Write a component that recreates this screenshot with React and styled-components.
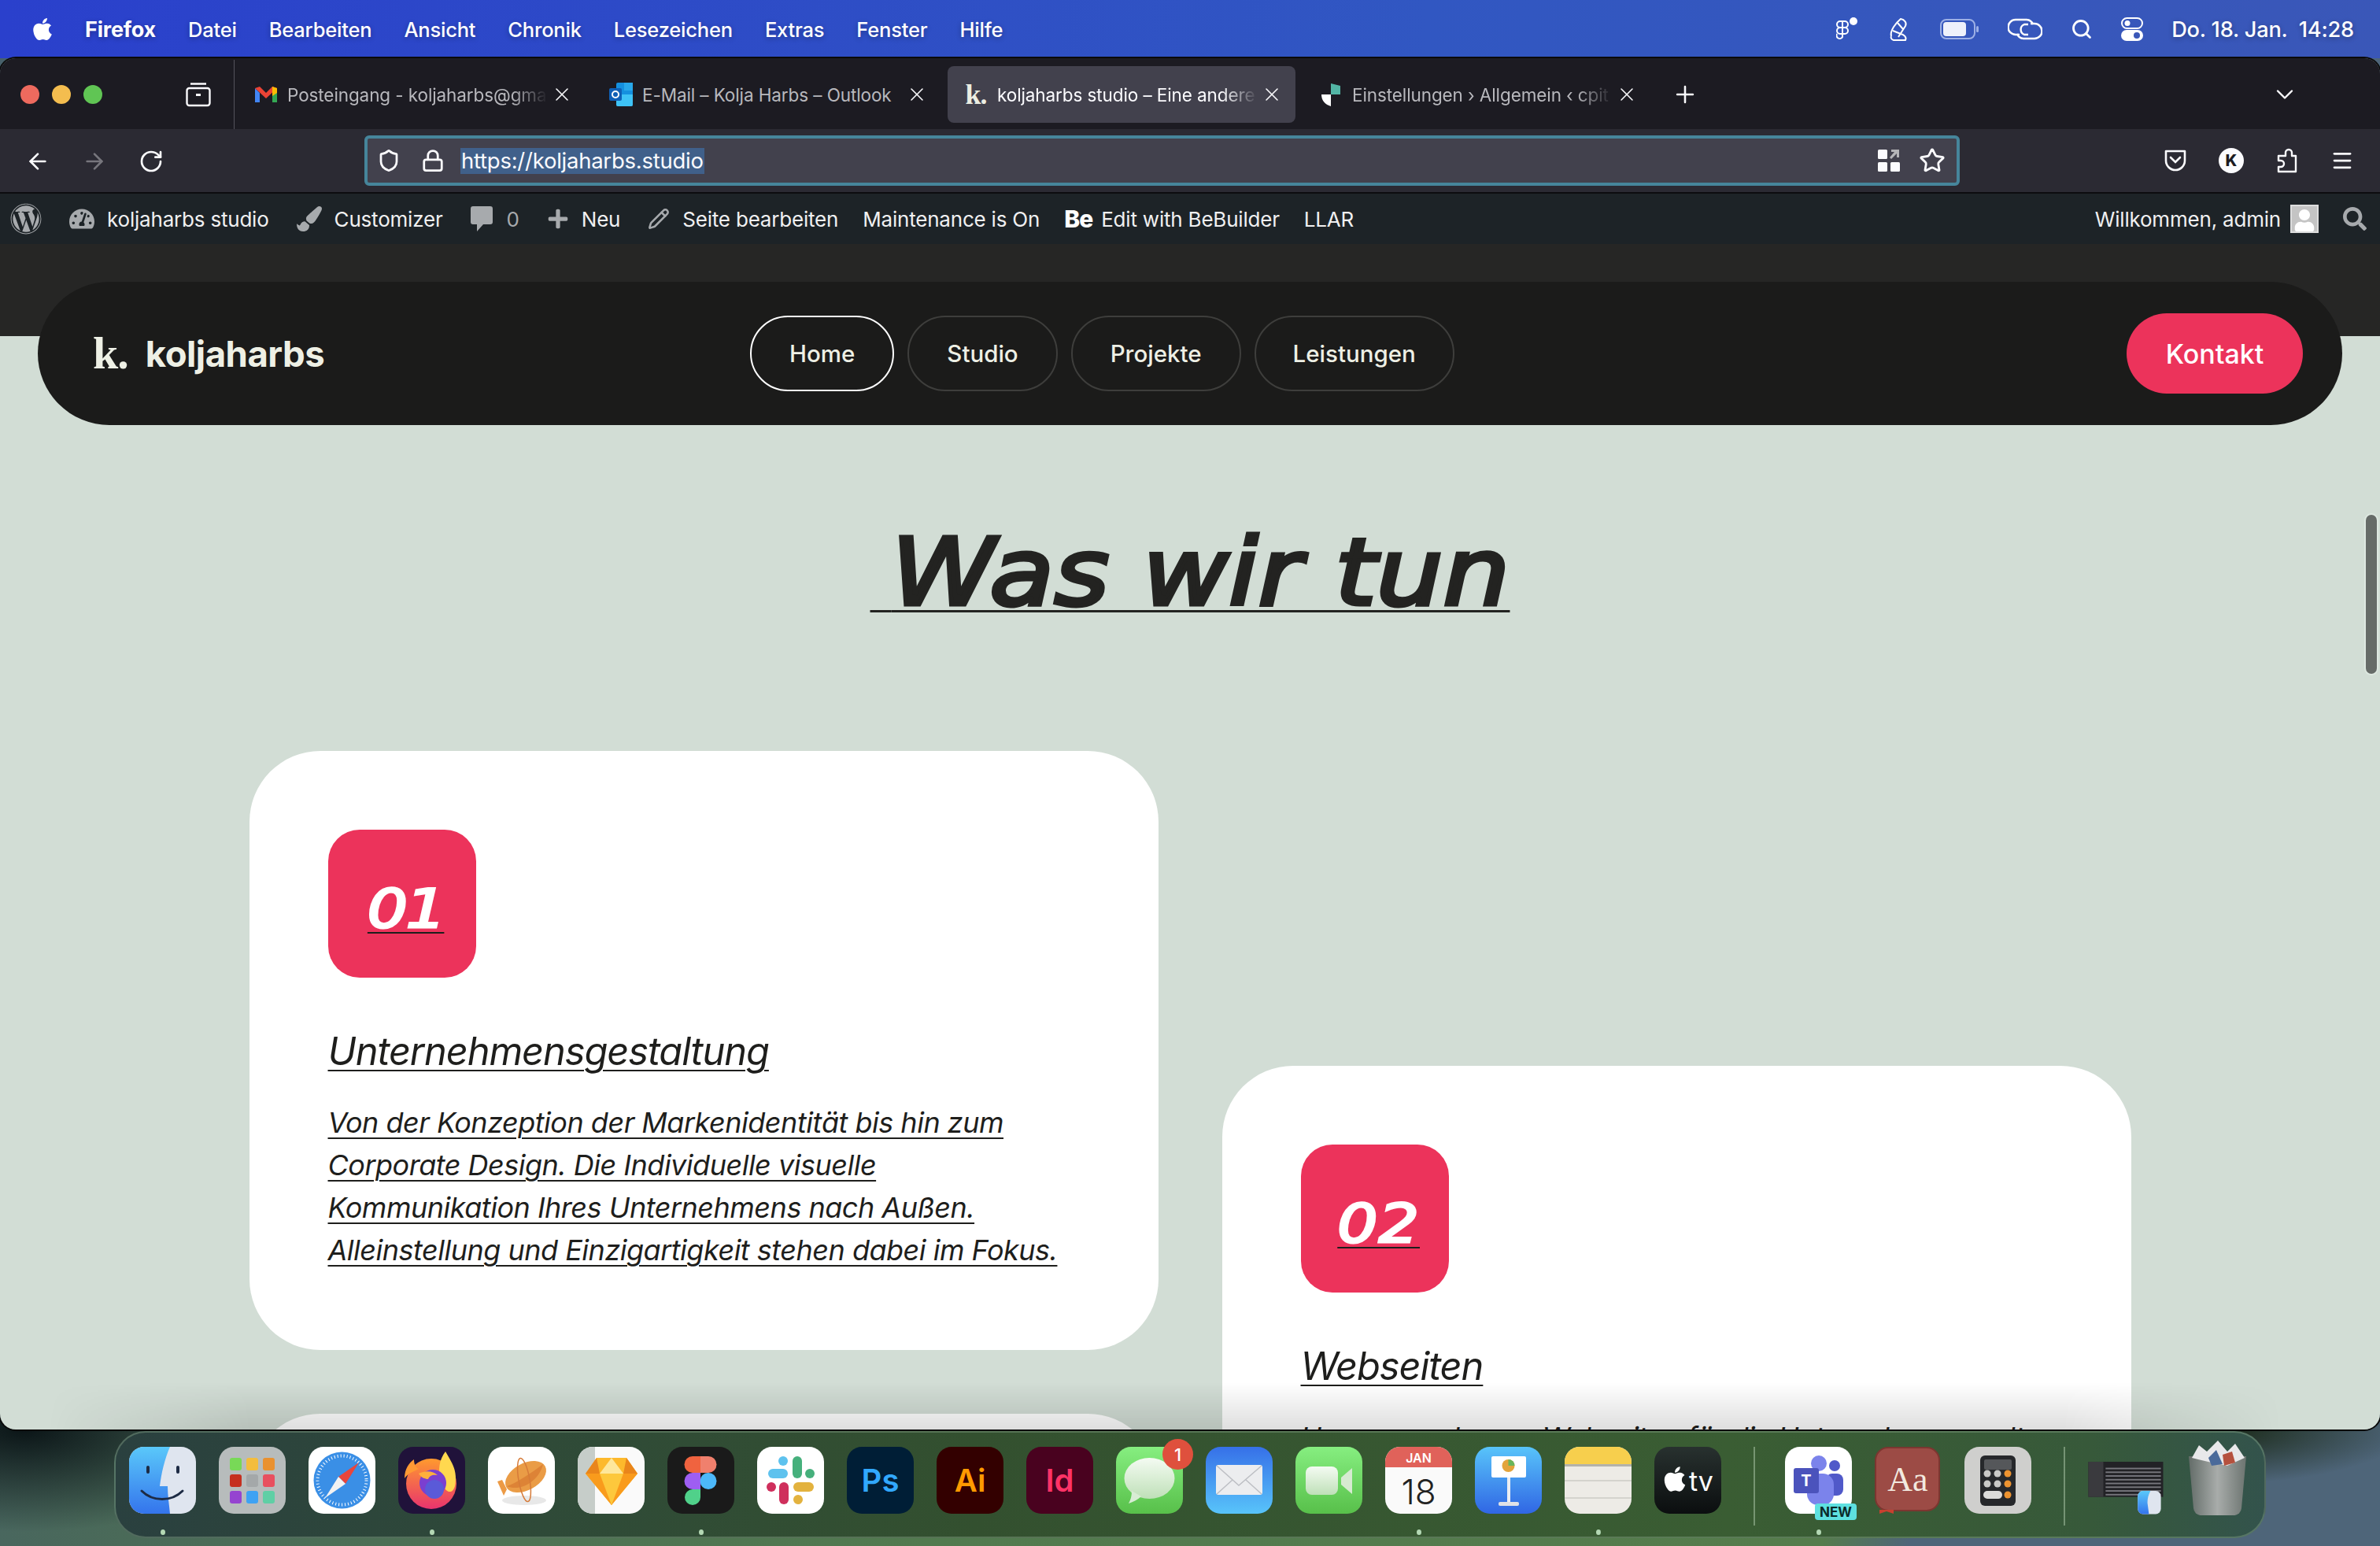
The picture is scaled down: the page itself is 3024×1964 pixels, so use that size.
import React from 'react';
import styled, { createGlobalStyle } from 'styled-components';
import { X, Plus, ChevronDown, ArrowLeft, ArrowRight, RotateCw, Shield, Lock, Star, Menu, Search, Pencil } from 'lucide-react';
import { FaApple, FaWordpress, FaTachometerAlt, FaPaintBrush, FaPlus, FaSearch, FaUser } from 'react-icons/fa';

const SF = '"Inter", "Liberation Sans", sans-serif';

const GlobalStyle = createGlobalStyle`
  html, body { margin: 0; padding: 0; background: #47606b; }
  * { box-sizing: border-box; }
`;

const Desktop = styled.div`
  width: 3024px;
  height: 1964px;
  overflow: hidden;
  display: flex;
  flex-direction: column;
  font-family: ${SF};
  background:
    radial-gradient(ellipse 320px 130px at 30px 1816px, #0b1517 0%, rgba(11, 21, 23, 0) 100%),
    radial-gradient(ellipse 260px 70px at 2800px 1816px, #16240f 0%, rgba(22, 36, 15, 0) 100%),
    linear-gradient(100deg, #47606b 0, #4a6a58 500px, #527a4f 1500px, #557c4c 2620px, #4e6579 2730px);
`;

const MenuBar = styled.div`
  height: 74px;
  flex: none;
  display: flex;
  align-items: center;
  padding: 0 33px 0 38px;
  gap: 41px;
  color: #fff;
  font-size: 25.5px;
  font-weight: 500;
  letter-spacing: -0.2px;
  text-shadow: 0 2px 6px rgba(0, 0, 0, 0.3);
  background: linear-gradient(90deg, #2a40cc 0, #3157c2 60%, #3a57b8 100%);
`;

const AppleMark = styled(FaApple)`
  font-size: 32px;
  margin-right: -3px;
`;

const MenuName = styled.span`
  font-weight: ${(p) => (p.$bold ? 700 : 500)};
  font-size: ${(p) => (p.$bold ? '27px' : 'inherit')};
`;

const StatusArea = styled.div`
  margin-left: auto;
  display: flex;
  align-items: center;
  gap: 36px;
`;

const ClockText = styled.span`
  font-size: 27.2px;
`;

const BrowserWindow = styled.div`
  flex: none;
  height: 1742px;
  display: flex;
  flex-direction: column;
  overflow: hidden;
  border-radius: 20px;
  box-shadow: 0 0 0 2px #0a0a0a, inset 0 1px 0 #6a6a6a;
`;

const TabBar = styled.div`
  height: 90px;
  flex: none;
  display: flex;
  align-items: center;
  padding-top: 2px;
  background: #1c1b22;
`;

const TabLeading = styled.div`
  width: 298px;
  height: 100%;
  flex: none;
  display: flex;
  align-items: center;
  padding-left: 26px;
  gap: 16px;
  border-right: 1px solid #55545c;
  margin-right: 4px;
`;

const TrafficLight = styled.span`
  width: 24px;
  height: 24px;
  border-radius: 50%;
  background: ${(p) => p.$color};
`;

const ViewButton = styled.svg`
  width: 32px;
  height: 32px;
  margin-left: 90px;
`;

const Tab = styled.div`
  width: 442px;
  height: 72px;
  flex: none;
  margin-right: 9px;
  display: flex;
  align-items: center;
  padding: 0 16px 0 20px;
  border-radius: 8px;
  font-size: 22.5px;
  letter-spacing: -0.1px;
  color: ${(p) => (p.$active ? '#fbfbfe' : '#b8b8bd')};
  background: ${(p) => (p.$active ? '#42414d' : 'transparent')};
`;

const Favicon = styled.span`
  width: 32px;
  height: 32px;
  margin-right: 11px;
  flex: none;
  display: flex;
  align-items: center;
  justify-content: center;
`;

const TabKMark = styled.span`
  font-family: "Liberation Serif", serif;
  font-weight: 700;
  font-size: 36px;
  line-height: 32px;
  letter-spacing: -1px;
  color: #eceee2;
`;

const TabTitle = styled.span`
  flex: 1;
  white-space: nowrap;
  overflow: hidden;
  -webkit-mask-image: ${(p) => (p.$plain ? 'none' : 'linear-gradient(90deg, #000 86%, transparent 100%)')};
  mask-image: ${(p) => (p.$plain ? 'none' : 'linear-gradient(90deg, #000 86%, transparent 100%)')};
`;

const TabClose = styled(X)`
  flex: none;
  margin-left: 4px;
  color: #fbfbfe;
`;

const TabStripButton = styled.span`
  display: flex;
  margin-left: ${(p) => p.$left};
  margin-right: ${(p) => p.$right || 0};
  color: #fbfbfe;
`;

const Toolbar = styled.div`
  height: 80px;
  flex: none;
  display: flex;
  align-items: center;
  padding: 0 33px 0 32px;
  background: #2b2a33;
  color: #fbfbfe;
`;

const NavIcons = styled.div`
  display: flex;
  gap: 40px;
  width: 431px;
  flex: none;
  margin-top: 2px;
`;

const UrlBar = styled.div`
  width: 2027px;
  height: 64px;
  flex: none;
  display: flex;
  align-items: center;
  padding: 0 14px 0 12px;
  background: #42414d;
  border: 4px solid #46859b;
  border-radius: 6px;
`;

const UrlLock = styled(Lock)`
  margin-left: 26px;
`;

const UrlText = styled.span`
  margin: 1px 0 0 20px;
  padding: 0 1px;
  font-size: 27.5px;
  line-height: 33px;
  color: #fbfbfe;
  background: #40608a;
  letter-spacing: -0.25px;
`;

const UrlActions = styled.div`
  margin-left: auto;
  display: flex;
  align-items: center;
  gap: 24px;
`;

const ToolbarActions = styled.div`
  margin-left: auto;
  display: flex;
  align-items: center;
  gap: 41px;
`;

const AccountBadge = styled.span`
  width: 32px;
  height: 32px;
  border-radius: 50%;
  display: flex;
  align-items: center;
  justify-content: center;
  background: #fbfbfe;
  color: #1c1b22;
  font-size: 20px;
  font-weight: 800;
`;

const AdminBar = styled.div`
  height: 66px;
  flex: none;
  display: flex;
  align-items: center;
  padding: 0 17px 0 13px;
  gap: 31px;
  font-size: 26px;
  letter-spacing: -0.2px;
  color: #f0f0f1;
  background: #1d2327;
  border-top: 2px solid #0c0c0f;
`;

const AdminItem = styled.span`
  display: flex;
  align-items: center;
  gap: ${(p) => p.$gap || 16}px;
  margin-left: ${(p) => (p.$plain ? 0 : 4)}px;
  color: ${(p) => (p.$muted ? '#a7aaad' : '#f0f0f1')};
  svg { color: #a7aaad; flex: none; }
`;

const BeMark = styled.span`
  font-weight: 800;
  font-size: 30px;
  letter-spacing: -1px;
  color: #fff;
`;

const AdminRight = styled.div`
  margin-left: auto;
  display: flex;
  align-items: center;
`;

const AvatarBox = styled.span`
  width: 36px;
  height: 36px;
  margin: 0 31px 0 12px;
  display: flex;
  align-items: flex-end;
  justify-content: center;
  overflow: hidden;
  background: #c4c4c4;
  border: 2px solid #ddd;
  svg { color: #fff; }
`;

const Page = styled.div`
  flex: 1;
  min-height: 0;
  position: relative;
  overflow: hidden;
  padding: 48px 48px 0;
  background: linear-gradient(#262625 117px, #d2ddd5 117px);
`;

const SiteNav = styled.nav`
  height: 182px;
  display: flex;
  align-items: center;
  padding: 0 50px 0 70px;
  background: #1b1b1a;
  border-radius: 91px;
`;

const Logo = styled.div`
  width: 835px;
  flex: none;
  display: flex;
  align-items: center;
  gap: 22px;
  color: #eef0e5;
`;

const LogoMark = styled.span`
  font-family: "Liberation Serif", serif;
  font-weight: 700;
  font-size: 58px;
  line-height: 60px;
  letter-spacing: -1px;
`;

const LogoName = styled.span`
  font-family: ${SF};
  font-weight: 700;
  font-size: 45.5px;
  letter-spacing: -0.5px;
`;

const NavLinks = styled.div`
  display: flex;
  gap: 17px;
`;

const NavLink = styled.a`
  height: 96px;
  display: flex;
  align-items: center;
  padding: 0 ${(p) => p.$pad}px;
  border-radius: 48px;
  font-size: 29.5px;
  font-weight: 500;
  color: #eef0e5;
  border: 2px solid ${(p) => (p.$active ? '#fff' : '#3e3e3c')};
`;

const ContactButton = styled.a`
  margin-left: auto;
  width: 224px;
  height: 102px;
  display: flex;
  align-items: center;
  justify-content: center;
  border-radius: 51px;
  background: #ec335b;
  color: #fff;
  font-size: 34px;
  font-weight: 500;
`;

const Headline = styled.h1`
  margin: 113px 0 0;
  text-align: center;
  font-family: "DejaVu Sans", sans-serif;
  font-style: italic;
  font-weight: 400;
  font-size: 118px;
  line-height: 148px;
  letter-spacing: 0;
  color: #232321;
  -webkit-text-stroke: 5px #232321;
  text-decoration: underline;
  text-decoration-thickness: 3px;
  text-underline-offset: 7px;
  transform: scaleX(1.135);
`;

const CardGrid = styled.div`
  margin-top: 153px;
  display: flex;
  justify-content: center;
  gap: 81px;
`;

const CardColumn = styled.div`
  width: 1155px;
  flex: none;
  display: flex;
  flex-direction: column;
  gap: 81px;
  padding-top: ${(p) => p.$offset || 0}px;
`;

const Card = styled.article`
  min-height: 761px;
  padding: 100px;
  background: #fff;
  border-radius: 90px;
`;

const NumberBadge = styled.div`
  width: 188px;
  height: 188px;
  padding: 14px 0 0 10px;
  display: flex;
  align-items: center;
  justify-content: center;
  border-radius: 40px;
  background: #ec335b;
`;

const NumberLabel = styled.span`
  display: inline-block;
  color: #fff;
  font-family: "DejaVu Sans", sans-serif;
  font-style: italic;
  font-weight: 400;
  font-size: 67px;
  letter-spacing: ${(p) => p.$spacing}px;
  -webkit-text-stroke: 3px #fff;
  text-decoration: underline;
  text-decoration-color: #1e1e1c;
  text-decoration-thickness: 2px;
  text-underline-offset: 6px;
  transform: scaleX(1.2);
`;

const CardTitle = styled.h3`
  margin: 62px 0 0;
  font-size: 48.8px;
  line-height: 64px;
  font-weight: 400;
  font-style: italic;
  letter-spacing: -1.1px;
  color: #1e1e1c;
  text-decoration: underline;
  text-decoration-thickness: 2px;
  text-underline-offset: 6px;
`;

const CardText = styled.p`
  margin: 31px 0 0;
  font-size: 36px;
  line-height: 54px;
  font-style: italic;
  letter-spacing: -0.5px;
  color: #1e1e1c;
  text-decoration: underline;
  text-decoration-thickness: 2px;
  text-underline-offset: 6px;
`;

const BottomShade = styled.div`
  position: absolute;
  left: 0;
  right: 0;
  bottom: 0;
  height: 60px;
  background: linear-gradient(rgba(0, 0, 0, 0), rgba(0, 0, 0, 0.13));
  -webkit-mask-image: linear-gradient(90deg, transparent 60px, #000 320px, #000 2620px, transparent 2900px);
  mask-image: linear-gradient(90deg, transparent 60px, #000 320px, #000 2620px, transparent 2900px);
`;

const ScrollThumb = styled.div`
  position: absolute;
  right: 4px;
  top: 344px;
  width: 14px;
  height: 202px;
  border-radius: 7px;
  background: #666b68;
  box-shadow: 0 0 0 2px rgba(230, 240, 234, 0.6);
`;

const Dock = styled.div`
  width: 2734px;
  height: 136px;
  margin: 2px 0 0 145px;
  flex: none;
  display: flex;
  padding: 18px 0 0 17px;
  gap: 29px;
  border: 2px solid rgba(140, 170, 140, 0.4);
  border-radius: 40px;
  background: linear-gradient(90deg, #2a403f 0, #2f4a38 20%, #33502f 40%, #3a5d33 75%, #37593a 92%, #33534c 100%);
`;

const DockSlot = styled.div`
  position: relative;
  width: ${(p) => p.$w || 85}px;
  margin-top: ${(p) => p.$lift || 0}px;
  margin-left: ${(p) => p.$nudge || 0}px;
  flex: none;
  display: flex;
  flex-direction: column;
  align-items: center;
`;

const DockDot = styled.span`
  width: 6px;
  height: 7px;
  margin-top: 20px;
  border-radius: 50%;
  background: #b4d8b4;
  visibility: ${(p) => (p.$on ? 'visible' : 'hidden')};
`;

const DockDivider = styled.span`
  width: 2px;
  height: 100px;
  flex: none;
  margin: 0 9px 0 12px;
  background: rgba(180, 205, 175, 0.5);
`;

const MessageBadge = styled.span`
  position: absolute;
  top: -10px;
  right: -13px;
  width: 39px;
  height: 39px;
  border-radius: 50%;
  display: flex;
  align-items: center;
  justify-content: center;
  background: #df503d;
  color: #fff;
  font-size: 22px;
  font-weight: 500;
`;

const NewBadge = styled.span`
  position: absolute;
  top: 72px;
  right: -6px;
  width: 53px;
  height: 21px;
  border-radius: 4px;
  display: flex;
  align-items: center;
  justify-content: center;
  background: #5ee0e0;
  color: #0b2a2a;
  font-size: 17px;
  font-weight: 700;
`;

/* --- small drawings --- */

const GmailIcon = () => (
  <svg width="30" height="24" viewBox="0 0 30 24">
    <path d="M1 4v18h6V10z" fill="#4285f4" />
    <path d="M29 4v18h-6V10z" fill="#34a853" />
    <path d="M1 4 7 2l8 8 8-8 6 2-14 13z" fill="#ea4335" />
    <path d="M23 2l6 2v6l-6 4z" fill="#fbbc04" />
  </svg>
);

const OutlookIcon = () => (
  <svg width="32" height="32" viewBox="0 0 32 32">
    <rect x="10" y="1" width="21" height="30" rx="2" fill="#1490df" />
    <rect x="20" y="1" width="11" height="10" fill="#28a8ea" />
    <path d="M10 16 31 16v13a2 2 0 0 1-2 2H12a2 2 0 0 1-2-2z" fill="#50d9ff" opacity=".7" />
    <rect x="1" y="8" width="16" height="16" rx="2" fill="#0f5fb5" />
    <circle cx="9" cy="16" r="4" fill="none" stroke="#fff" strokeWidth="2" />
  </svg>
);

const PluginIcon = () => (
  <svg width="28" height="32" viewBox="0 0 28 32">
    <path d="M14 2l12 3v11H14z" fill="#52b5a5" />
    <path d="M2 16h12v15C7 29 2 24 2 16z" fill="#fff" />
  </svg>
);

const FigmaStatus = () => (
  <svg width="28" height="32" viewBox="0 0 28 32" fill="none" stroke="#fff" strokeWidth="2">
    <rect x="1" y="6" width="14" height="8" rx="4" />
    <rect x="1" y="14" width="14" height="8" rx="4" />
    <path d="M8 22v4a4 4 0 1 1-7-4M8 6v16" />
    <circle cx="22" cy="6" r="5" fill="#fff" stroke="none" />
  </svg>
);

const InkStatus = () => (
  <svg width="32" height="32" viewBox="0 0 32 32" fill="none" stroke="#fff" strokeWidth="2">
    <path d="M6 25C4 18 12 8 18 3c5 1 8 5 6 9l-9 14" />
    <path d="M8 18l10 4c4 1 8 4 6 8H9c-3-1-4-3-3-5M14 8l7 8" />
  </svg>
);

const BatteryStatus = () => (
  <svg width="50" height="26" viewBox="0 0 50 26">
    <rect x="1" y="1" width="43" height="24" rx="7" fill="none" stroke="#9db0e6" strokeWidth="2" />
    <rect x="4" y="4" width="29" height="18" rx="4" fill="#eef1fb" />
    <rect x="46" y="9" width="3" height="8" rx="1.5" fill="#9db0e6" />
  </svg>
);

const LinkStatus = () => (
  <svg width="44" height="30" viewBox="0 0 44 30" fill="none" stroke="#fff" strokeWidth="2.4">
    <path d="M15 22H10a9 9 0 0 1 0-19h14a9 9 0 0 1 8 6" />
    <path d="M29 8h5a9 9 0 0 1 0 19H20a9 9 0 0 1-8-6" />
    <path d="M26 9h-5a7 7 0 0 0 0 13h5" />
  </svg>
);

const ControlStatus = () => (
  <svg width="28" height="30" viewBox="0 0 28 30">
    <rect x="1" y="1" width="26" height="13" rx="6.5" fill="none" stroke="#fff" strokeWidth="2" />
    <circle cx="8" cy="7.5" r="3.5" fill="#fff" />
    <rect x="0" y="16" width="28" height="14" rx="7" fill="#fff" />
    <circle cx="20" cy="23" r="4" fill="#3a57b8" />
  </svg>
);

const QrIcon = () => (
  <svg width="28" height="32" viewBox="0 0 28 32">
    <rect x="0" y="2" width="12" height="12" rx="1.5" fill="#fbfbfe" />
    <rect x="0" y="18" width="12" height="12" rx="1.5" fill="#fbfbfe" />
    <rect x="16" y="18" width="12" height="12" rx="1.5" fill="#fbfbfe" />
    <path d="M17 2h10v10h-3V7l-7 7-2-2 6-7h-4z" fill="#b5b5b8" />
  </svg>
);

const PocketIcon = () => (
  <svg width="28" height="30" viewBox="0 0 28 30" fill="none" stroke="#fbfbfe" strokeWidth="2.6">
    <path d="M2 3h24v12a12 12 0 0 1-24 0z" strokeLinejoin="round" />
    <path d="M8 11l6 6 6-6" strokeLinecap="round" />
  </svg>
);

const PuzzleIcon = () => (
  <svg width="28" height="32" viewBox="0 0 28 32" fill="none" stroke="#fbfbfe" strokeWidth="2.4" strokeLinejoin="round">
    <path d="M3 10H12V6a4 4 0 0 1 8 0V10H25V30H3V24h3a4 4 0 0 0 0-8H3Z" />
  </svg>
);

const CommentIcon = () => (
  <svg width="28" height="32" viewBox="0 0 28 32">
    <path d="M3 0h22a3 3 0 0 1 3 3v17a3 3 0 0 1-3 3H16l-8 9v-9H3a3 3 0 0 1-3-3V3a3 3 0 0 1 3-3z" fill="currentColor" />
  </svg>
);

const Apple = (p) => <FaApple {...p} color="#fff" />;

const icons = {
  finder: (
    <>
      <rect width="85" height="85" rx="19" fill="#dfe5ef" />
      <path d="M19 0h33C45 16 41 34 39 50h10c0 12 2 24 3 35H19A19 19 0 0 1 0 66V19A19 19 0 0 1 19 0z" fill="url(#finderBlue)" />
      <rect x="22" y="24" width="4" height="10" rx="2" fill="#1d2b44" />
      <rect x="60" y="24" width="4" height="10" rx="2" fill="#1d2b44" />
      <path d="M16 56c14 14 38 14 52 0" fill="none" stroke="#1d2b44" strokeWidth="3" strokeLinecap="round" />
    </>
  ),
  launchpad: (
    <>
      <rect width="85" height="85" rx="19" fill="#b7bcbc" />
      {['#78d957', '#f3bd3d', '#e9912f', '#c5301f', '#a4a8a9', '#e8505f', '#9544d0', '#3ea2f3', '#5fcfa5'].map((c, i) => (
        <rect key={c} x={14 + (i % 3) * 21} y={14 + Math.floor(i / 3) * 21} width="15" height="16" rx="3" fill={c} />
      ))}
    </>
  ),
  safari: (
    <>
      <rect width="85" height="85" rx="19" fill="#fff" />
      <circle cx="42.5" cy="42.5" r="36" fill="#3a8fe6" />
      <circle cx="42.5" cy="42.5" r="31" fill="none" stroke="#fff" strokeWidth="4" strokeDasharray="1 3" />
      <path d="M64 20 47 47 38 38z" fill="#e8453c" />
      <path d="M21 65 38 38l9 9z" fill="#f2f2f2" />
    </>
  ),
  firefox: (
    <>
      <rect width="85" height="85" rx="19" fill="#20123a" />
      <circle cx="42" cy="47" r="32" fill="url(#foxOuter)" />
      <path d="M60 6c8 14 16 24 12 44-4 12-12 8-18-6C50 30 52 16 60 6z" fill="#ffd84f" />
      <path d="M8 40c0-12 6-20 12-24 0 6 2 10 6 12-8 4-14 6-18 12z" fill="#ff9a34" />
      <circle cx="44" cy="46" r="17" fill="#7b3fd0" />
      <circle cx="46" cy="54" r="12" fill="#5a5ad8" />
      <path d="M26 34c8-4 18-4 24 2-6-1-10 0-12 5-4 0-9-2-12-7z" fill="#ffb03c" />
    </>
  ),
  zeppelin: (
    <>
      <rect width="85" height="85" rx="19" fill="#fff" />
      <ellipse cx="46" cy="68" rx="28" ry="6" fill="#e8e8e8" />
      <ellipse cx="48" cy="38" rx="28" ry="17" transform="rotate(-28 48 38)" fill="#ea9c46" />
      <path d="M24 50c12-4 30-16 46-28-4 20-28 36-46 28z" fill="#dd8336" />
      <path d="M18 42l6 12-4 8-8-18z" fill="#ec9a45" />
      <ellipse cx="46" cy="42" rx="7" ry="28" transform="rotate(-10 46 42)" fill="none" stroke="#d67b39" strokeWidth="1.5" />
    </>
  ),
  sketch: (
    <>
      <rect width="85" height="85" rx="19" fill="#fafafa" />
      <path d="M19 0h3v85h-3A19 19 0 0 1 0 66V19A19 19 0 0 1 19 0z" fill="#c6cdc9" />
      <polygon points="24,14 62,14 76,34 43,74 10,34" fill="#fdb92c" />
      <polygon points="10,34 76,34 43,74" fill="#f99b1c" />
      <polygon points="28,34 58,34 43,74" fill="#fdc83c" />
      <polygon points="43,14 58,34 28,34" fill="#fee79b" />
      <polygon points="10,34 24,14 28,34" fill="#e9851b" />
      <polygon points="76,34 62,14 58,34" fill="#e9851b" />
    </>
  ),
  figma: (
    <>
      <rect width="85" height="85" rx="19" fill="#1a1a1a" />
      <path d="M42 12H32a10 10 0 0 0 0 21h10z" fill="#f0633f" />
      <path d="M42 12h10a10 10 0 0 1 0 21H42z" fill="#f0806d" />
      <path d="M42 33H32a10 10 0 0 0 0 21h10z" fill="#9e5ef2" />
      <circle cx="52" cy="43.5" r="10.5" fill="#4cb8fa" />
      <path d="M32 54h10v10a10 10 0 1 1-10-10z" fill="#50d18a" />
    </>
  ),
  slack: (
    <>
      <rect width="85" height="85" rx="19" fill="#fff" />
      <rect x="27" y="12" width="12" height="12" rx="6" fill="#5ec2ee" />
      <rect x="14" y="28" width="25" height="12" rx="6" fill="#5ec2ee" />
      <rect x="45" y="12" width="12" height="28" rx="6" fill="#46b07c" />
      <rect x="61" y="28" width="12" height="12" rx="6" fill="#46b07c" />
      <rect x="46" y="45" width="26" height="12" rx="6" fill="#e3b23e" />
      <rect x="46" y="61" width="12" height="12" rx="6" fill="#e3b23e" />
      <rect x="28" y="45" width="12" height="28" rx="6" fill="#cf2f5c" />
      <rect x="12" y="45" width="12" height="12" rx="6" fill="#cf2f5c" />
    </>
  ),
  ps: (
    <>
      <rect width="85" height="85" rx="19" fill="#001e36" />
      <text x="42.5" y="57" textAnchor="middle" fontFamily="Inter, sans-serif" fontWeight="600" fontSize="40" fill="#31a8ff">Ps</text>
    </>
  ),
  ai: (
    <>
      <rect width="85" height="85" rx="19" fill="#330000" />
      <text x="42.5" y="57" textAnchor="middle" fontFamily="Inter, sans-serif" fontWeight="600" fontSize="40" fill="#ff9a00">Ai</text>
    </>
  ),
  id: (
    <>
      <rect width="85" height="85" rx="19" fill="#49021f" />
      <text x="42.5" y="57" textAnchor="middle" fontFamily="Inter, sans-serif" fontWeight="600" fontSize="40" fill="#ff3366">Id</text>
    </>
  ),
  messages: (
    <>
      <rect width="85" height="85" rx="19" fill="url(#greenTile)" />
      <ellipse cx="42.5" cy="40" rx="32" ry="26" fill="url(#bubble)" />
      <path d="M20 56c0 8-2 12-4 16 6-2 12-5 16-9z" fill="#d8ecd4" />
    </>
  ),
  mail: (
    <>
      <rect width="85" height="85" rx="19" fill="url(#blueTile)" />
      <rect x="13" y="23" width="59" height="38" rx="3" fill="#ecedef" />
      <path d="M14 24l28 25 29-25M14 60l20-18M71 60 51 42" fill="none" stroke="#bdbfc4" strokeWidth="1.5" />
    </>
  ),
  facetime: (
    <>
      <rect width="85" height="85" rx="19" fill="url(#greenTile)" />
      <rect x="13" y="25" width="41" height="36" rx="8" fill="url(#bubble)" />
      <path d="M58 39l14-12v33L58 48z" fill="#d6ead1" />
    </>
  ),
  calendar: (
    <>
      <rect width="85" height="85" rx="19" fill="#fafafa" />
      <path d="M19 0h47a19 19 0 0 1 19 19v7H0v-7A19 19 0 0 1 19 0z" fill="#e0625a" />
      <text x="42.5" y="20" textAnchor="middle" fontFamily="Inter, sans-serif" fontWeight="600" fontSize="16" fill="#fff">JAN</text>
      <text x="42.5" y="73" textAnchor="middle" fontFamily="Inter, sans-serif" fontWeight="300" fontSize="44" fill="#222">18</text>
    </>
  ),
  keynote: (
    <>
      <rect width="85" height="85" rx="19" fill="url(#blueTileRev)" />
      <rect x="21" y="12" width="44" height="27" rx="2" fill="#fff" />
      <circle cx="42.5" cy="24" r="8" fill="#e3a43b" />
      <path d="M42.5 24V16a8 8 0 0 1 8 8z" fill="#69b65b" />
      <rect x="41" y="39" width="4" height="32" fill="#eceef2" />
      <rect x="30" y="70" width="26" height="5" rx="2" fill="#dfe1e6" />
    </>
  ),
  notes: (
    <>
      <rect width="85" height="85" rx="19" fill="#edebe6" />
      <path d="M19 0h47a19 19 0 0 1 19 19v3H0v-3A19 19 0 0 1 19 0z" fill="#f7cf4d" />
      <rect y="22" width="85" height="3" fill="#b3b2ab" />
      <rect y="42" width="85" height="2" fill="#d4d3cd" />
      <rect y="64" width="85" height="2" fill="#d4d3cd" />
    </>
  ),
  tv: (
    <>
      <rect width="85" height="85" rx="19" fill="url(#tvTile)" />
      <Apple x="8" y="23" size="36" />
      <text x="44" y="56" fontFamily="Inter, sans-serif" fontWeight="400" fontSize="34" fill="#fff">tv</text>
    </>
  ),
  teams: (
    <>
      <rect width="85" height="85" rx="19" fill="#fff" />
      <circle cx="43" cy="21" r="10" fill="#7b83eb" />
      <circle cx="63" cy="24" r="7" fill="#5059c9" />
      <rect x="52" y="34" width="22" height="28" rx="8" fill="#5059c9" />
      <rect x="28" y="34" width="34" height="40" rx="14" fill="#7b83eb" />
      <rect x="11" y="27" width="32" height="32" rx="3" fill="#4b53bc" />
      <text x="27" y="50" textAnchor="middle" fontFamily="Inter, sans-serif" fontWeight="700" fontSize="20" fill="#fff">T</text>
    </>
  ),
  dictionary: (
    <>
      <rect x="1" y="1" width="81" height="80" rx="16" fill="#9c4b45" stroke="#7c3630" strokeWidth="2" />
      <path d="M6 80h18v5l-9-3-9 3z" fill="#c8402f" />
      <text x="42" y="56" textAnchor="middle" fontFamily="Liberation Serif, serif" fontSize="44" fill="#f2e9df">Aa</text>
    </>
  ),
  calculator: (
    <>
      <rect width="85" height="85" rx="19" fill="#cfcfcd" />
      <rect x="20" y="11" width="45" height="64" rx="6" fill="#26282b" />
      <rect x="25" y="16" width="35" height="13" rx="2" fill="#55575a" />
      {[34, 47].map((y) =>
        [29, 42, 55].map((x) => <circle key={`${x}${y}`} cx={x} cy={y} r="4.5" fill={x === 55 ? '#ed9330' : '#c9c9c7'} />)
      )}
      <rect x="24" y="56" width="24" height="10" rx="5" fill="#dcdcda" />
      <circle cx="55" cy="61" r="4.5" fill="#ed9330" />
    </>
  ),
  stack: (
    <>
      <rect x="0" y="20" width="100" height="47" fill="#222226" />
      <rect x="0" y="20" width="20" height="47" fill="#3a3a3e" />
      {[28, 33, 38, 43, 48, 53, 58, 63].map((y) => (
        <rect key={y} x="23" y={y} width="74" height="2" fill="#77777d" />
      ))}
      <rect x="66" y="59" width="31" height="31" rx="7" fill="#dfe5ef" />
      <path d="M73 59h10c-3 6-4 10-4 16l2 15h-8a7 7 0 0 1-7-7V66a7 7 0 0 1 7-7z" fill="url(#finderBlue)" />
    </>
  ),
  trash: (
    <>
      <path d="M1 20h73l-6 66a10 10 0 0 1-9 9H16a10 10 0 0 1-9-9z" fill="url(#trashBody)" />
      <polygon points="5,22 14,6 24,14 38,0 50,14 60,4 72,22 50,32 30,28" fill="#e8e8ea" />
      <polygon points="26,22 36,12 44,30 30,32" fill="#4a6a9a" />
      <polygon points="44,18 56,14 60,28 46,32" fill="#b5513e" />
    </>
  ),
};

const DockIcon = ({ name, w = 85, h = 85, vb }) => (
  <svg width={w} height={h} viewBox={vb || `0 0 ${w} ${h}`}>
    <defs>
      <linearGradient id="finderBlue" x1="0" y1="0" x2="0" y2="1"><stop offset="0" stopColor="#5ac8fa" /><stop offset="1" stopColor="#3474ec" /></linearGradient>
      <linearGradient id="greenTile" x1="0" y1="0" x2="0" y2="1"><stop offset="0" stopColor="#86ee80" /><stop offset="1" stopColor="#58c04a" /></linearGradient>
      <linearGradient id="blueTile" x1="0" y1="0" x2="0" y2="1"><stop offset="0" stopColor="#3670e8" /><stop offset="1" stopColor="#58c4fa" /></linearGradient>
      <linearGradient id="blueTileRev" x1="0" y1="0" x2="0" y2="1"><stop offset="0" stopColor="#58c4fa" /><stop offset="1" stopColor="#3066e4" /></linearGradient>
      <linearGradient id="bubble" x1="0" y1="0" x2="0" y2="1"><stop offset="0" stopColor="#f4fbf2" /><stop offset="1" stopColor="#bfe0b8" /></linearGradient>
      <linearGradient id="tvTile" x1="0" y1="0" x2="0" y2="1"><stop offset="0" stopColor="#28312f" /><stop offset="1" stopColor="#0b0e0f" /></linearGradient>
      <linearGradient id="foxOuter" x1="0" y1="0" x2="0" y2="1"><stop offset="0" stopColor="#ff9a2e" /><stop offset="1" stopColor="#e8336e" /></linearGradient>
      <linearGradient id="trashBody" x1="0" y1="0" x2="1" y2="0"><stop offset="0" stopColor="#636c68" /><stop offset=".5" stopColor="#a8acaa" /><stop offset="1" stopColor="#6c7470" /></linearGradient>
    </defs>
    {icons[name]}
  </svg>
);

const dockApps = [
  { name: 'finder', on: true },
  { name: 'launchpad' },
  { name: 'safari' },
  { name: 'firefox', on: true },
  { name: 'zeppelin' },
  { name: 'sketch' },
  { name: 'figma', on: true },
  { name: 'slack' },
  { name: 'ps' },
  { name: 'ai' },
  { name: 'id' },
  { name: 'messages', badge: '1' },
  { name: 'mail' },
  { name: 'facetime' },
  { name: 'calendar', on: true },
  { name: 'keynote' },
  { name: 'notes', on: true },
  { name: 'tv' },
  { divider: true },
  { name: 'teams', on: true, fresh: true },
  { name: 'dictionary' },
  { name: 'calculator' },
  { divider: true },
  { name: 'stack', w: 100, h: 92, vb: '0 0 100 92', nudge: -11 },
  { name: 'trash', w: 75, h: 97, vb: '0 0 75 95', lift: -8 },
];

const menuItems = ['Datei', 'Bearbeiten', 'Ansicht', 'Chronik', 'Lesezeichen', 'Extras', 'Fenster', 'Hilfe'];

const App = () => (
  <Desktop>
    <GlobalStyle />
    <MenuBar>
      <AppleMark />
      <MenuName $bold>Firefox</MenuName>
      {menuItems.map((m) => <MenuName key={m}>{m}</MenuName>)}
      <StatusArea>
        <FigmaStatus />
        <InkStatus />
        <BatteryStatus />
        <LinkStatus />
        <Search size={28} strokeWidth={2.4} />
        <ControlStatus />
        <ClockText>Do. 18. Jan.&nbsp; 14:28</ClockText>
      </StatusArea>
    </MenuBar>

    <BrowserWindow>
      <TabBar>
        <TabLeading>
          <TrafficLight $color="#ee6a5e" />
          <TrafficLight $color="#f4bd4f" />
          <TrafficLight $color="#60c554" />
          <ViewButton viewBox="0 0 32 32" fill="none" stroke="#fbfbfe" strokeWidth="2.4">
            <rect x="1.5" y="8" width="29" height="22" rx="3" />
            <path d="M6 2.5h20" />
            <rect x="13" y="15" width="6" height="3" fill="#fbfbfe" stroke="none" />
          </ViewButton>
        </TabLeading>
        <Tab>
          <Favicon><GmailIcon /></Favicon>
          <TabTitle>Posteingang - koljaharbs@gmail.com</TabTitle>
          <TabClose size={28} strokeWidth={1.3} />
        </Tab>
        <Tab>
          <Favicon><OutlookIcon /></Favicon>
          <TabTitle $plain>E-Mail – Kolja Harbs – Outlook</TabTitle>
          <TabClose size={28} strokeWidth={1.3} />
        </Tab>
        <Tab $active>
          <Favicon><TabKMark>k.</TabKMark></Favicon>
          <TabTitle>koljaharbs studio – Eine andere Welt</TabTitle>
          <TabClose size={28} strokeWidth={1.3} />
        </Tab>
        <Tab>
          <Favicon><PluginIcon /></Favicon>
          <TabTitle>Einstellungen › Allgemein ‹ cpit — WordPress</TabTitle>
          <TabClose size={28} strokeWidth={1.3} />
        </Tab>
        <TabStripButton $left="18px"><Plus size={34} strokeWidth={1.8} /></TabStripButton>
        <TabStripButton $left="auto" $right="103px"><ChevronDown size={36} strokeWidth={1.6} /></TabStripButton>
      </TabBar>

      <Toolbar>
        <NavIcons>
          <ArrowLeft size={32} strokeWidth={2} />
          <ArrowRight size={32} strokeWidth={2} color="#77767d" />
          <RotateCw size={32} strokeWidth={2} />
        </NavIcons>
        <UrlBar>
          <Shield size={30} strokeWidth={2.2} />
          <UrlLock size={30} strokeWidth={2.2} />
          <UrlText>https://koljaharbs.studio</UrlText>
          <UrlActions>
            <QrIcon />
            <Star size={34} strokeWidth={2} />
          </UrlActions>
        </UrlBar>
        <ToolbarActions>
          <PocketIcon />
          <AccountBadge>K</AccountBadge>
          <PuzzleIcon />
          <Menu size={30} strokeWidth={2.2} />
        </ToolbarActions>
      </Toolbar>

      <AdminBar>
        <FaWordpress size={40} color="#a7aaad" />
        <AdminItem><FaTachometerAlt size={32} />koljaharbs studio</AdminItem>
        <AdminItem><FaPaintBrush size={32} />Customizer</AdminItem>
        <AdminItem $muted $gap={18}><CommentIcon />0</AdminItem>
        <AdminItem><FaPlus size={28} />Neu</AdminItem>
        <AdminItem><Pencil size={28} strokeWidth={2.2} />Seite bearbeiten</AdminItem>
        <AdminItem $plain>Maintenance is On</AdminItem>
        <AdminItem $plain $gap={11}><BeMark>Be</BeMark>Edit with BeBuilder</AdminItem>
        <AdminItem $plain>LLAR</AdminItem>
        <AdminRight>
          <span>Willkommen, admin</span>
          <AvatarBox><FaUser size={28} /></AvatarBox>
          <FaSearch size={30} color="#a7aaad" />
        </AdminRight>
      </AdminBar>

      <Page>
        <SiteNav>
          <Logo>
            <LogoMark>k.</LogoMark>
            <LogoName>koljaharbs</LogoName>
          </Logo>
          <NavLinks>
            <NavLink $active $pad={48}>Home</NavLink>
            <NavLink $pad={48}>Studio</NavLink>
            <NavLink $pad={48}>Projekte</NavLink>
            <NavLink $pad={47}>Leistungen</NavLink>
          </NavLinks>
          <ContactButton>Kontakt</ContactButton>
        </SiteNav>

        <Headline>{'\u2009'}Was wir tun</Headline>

        <CardGrid>
          <CardColumn>
            <Card>
              <NumberBadge><NumberLabel $spacing={-2}>01</NumberLabel></NumberBadge>
              <CardTitle>Unternehmensgestaltung</CardTitle>
              <CardText>
                Von der Konzeption der Markenidentität bis hin zum<br />
                Corporate Design. Die Individuelle visuelle<br />
                Kommunikation Ihres Unternehmens nach Außen.<br />
                Alleinstellung und Einzigartigkeit stehen dabei im Fokus.
              </CardText>
            </Card>
            <Card />
          </CardColumn>
          <CardColumn $offset={400}>
            <Card>
              <NumberBadge><NumberLabel $spacing={1}>02</NumberLabel></NumberBadge>
              <CardTitle>Webseiten</CardTitle>
              <CardText>Unsere modernen Webseiten für die Unternehmenswelt</CardText>
            </Card>
          </CardColumn>
        </CardGrid>

        <BottomShade />
        <ScrollThumb />
      </Page>
    </BrowserWindow>

    <Dock>
      {dockApps.map((app, i) =>
        app.divider ? (
          <DockDivider key={i} />
        ) : (
          <DockSlot key={app.name} $w={app.w} $lift={app.lift} $nudge={app.nudge}>
            <DockIcon name={app.name} w={app.w} h={app.h} vb={app.vb} />
            <DockDot $on={app.on} />
            {app.badge && <MessageBadge>{app.badge}</MessageBadge>}
            {app.fresh && <NewBadge>NEW</NewBadge>}
          </DockSlot>
        )
      )}
    </Dock>
  </Desktop>
);

export default App;
